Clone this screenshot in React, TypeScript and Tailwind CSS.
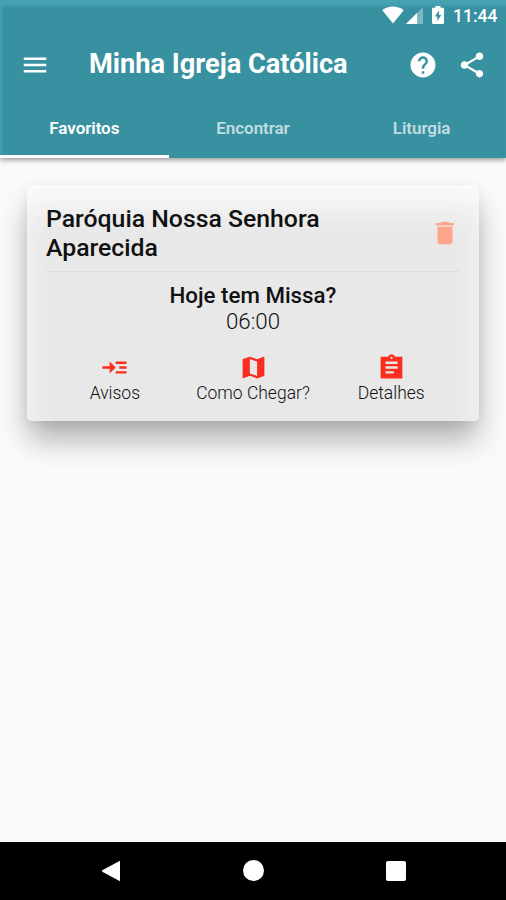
import type { ReactNode } from "react";

const actions = [
  {
    label: "Avisos",
    width: "w-[138px]",
    path: "M22 7h-9v2h9V7zm0 8h-9v2h9v-2zm0-4h-6v2h6v-2zm-9 1L8 7v4H2v2h6v4l5-5z",
  },
  {
    label: "Como Chegar?",
    width: "w-[139px]",
    path: "M20.5 3l-.16.03L15 5.1 9 3 3.36 4.9c-.21.07-.36.25-.36.48V20.5c0 .28.22.5.5.5l.16-.03L9 18.9l6 2.1 5.64-1.9c.21-.07.36-.25.36-.48V3.5c0-.28-.22-.5-.5-.5zM15 19l-6-2.11V5l6 2.11V19z",
  },
  {
    label: "Detalhes",
    width: "w-[138px]",
    path: "M21 3h-6.18C14.4 1.84 13.3 1 12 1c-1.3 0-2.4.84-2.82 2H3v18h18V3zm-9 0c.55 0 1 .45 1 1s-.45 1-1 1-1-.45-1-1 .45-1 1-1zm2 14H7v-2h7v2zm3-4H7v-2h10v2zm0-4H7V7h10v2z",
  },
];

const tabs = ["Favoritos", "Encontrar", "Liturgia"];

function Icon({ className, children }: { className: string; children: ReactNode }) {
  return (
    <svg viewBox="0 0 24 24" fill="currentColor" className={`shrink-0 ${className}`}>
      {children}
    </svg>
  );
}

function StatusBar() {
  return (
    <div className="flex h-[30px] items-center justify-end pr-[9px]">
      <svg viewBox="0 0 22 18" fill="currentColor" className="h-[18px] w-[22px]">
        <path d="M11 17.5L.3 4.2C3.4 1.8 7 .5 11 .5s7.6 1.3 10.7 3.7z" />
      </svg>
      <svg viewBox="0 0 18 17" fill="currentColor" className="ml-[2px] h-[17px] w-[18px]">
        <path d="M17 0v17H0z" opacity=".35" />
        <path d="M11 6v11H0z" />
      </svg>
      <svg viewBox="0 0 12 18" fill="currentColor" className="ml-[8px] h-[18px] w-[12px]">
        <path
          fillRule="evenodd"
          d="M3.5 0h5v1.8h2.3c.7 0 1.2.5 1.2 1.2v13.8c0 .7-.5 1.2-1.2 1.2H1.2C.5 18 0 17.5 0 16.8V3c0-.7.5-1.2 1.2-1.2h2.3zM7 4.5l-4.2 6h2.5V15l4-6H7z"
        />
      </svg>
      <span className="ml-[9px] mt-[3px] w-[44px] whitespace-nowrap text-[17.5px] font-medium leading-none">
        11:44
      </span>
    </div>
  );
}

function Header() {
  return (
    <header className="relative z-10 h-[158px] bg-[#3891a0] text-white shadow-[inset_0_7px_3px_-1px_#46a2b2,inset_2px_0_2px_#43a0af,0_2px_5px_rgba(0,0,0,0.4)]">
      <StatusBar />
      <div className="flex h-[69px] items-center pl-5">
        <Icon className="h-[30px] w-[30px]">
          <path d="M3 18h18v-2H3v2zm0-5h18v-2H3v2zm0-7v2h18V6H3z" />
        </Icon>
        <h1 className="ml-[39px] mt-px flex-1 whitespace-nowrap text-[27.2px] font-bold leading-none">
          Minha Igreja Católica
        </h1>
        <Icon className="h-[30px] w-[30px]">
          <path d="M12 2C6.48 2 2 6.48 2 12s4.48 10 10 10 10-4.48 10-10S17.52 2 12 2zm1 17h-2v-2h2v2zm2.07-7.75l-.9.92C13.45 12.9 13 13.5 13 15h-2v-.5c0-1.1.45-2.1 1.17-2.83l1.24-1.26c.37-.36.59-.86.59-1.41 0-1.1-.9-2-2-2s-2 .9-2 2H8c0-2.21 1.79-4 4-4s4 1.79 4 4c0 .88-.36 1.68-.93 2.25z" />
        </Icon>
        <Icon className="ml-[19px] mr-[19px] h-[30px] w-[30px]">
          <path d="M18 16.08c-.76 0-1.44.3-1.96.77L8.91 12.7c.05-.23.09-.46.09-.7s-.04-.47-.09-.7l7.05-4.11c.54.5 1.25.81 2.04.81 1.66 0 3-1.34 3-3s-1.34-3-3-3-3 1.34-3 3c0 .24.04.47.09.7L8.04 9.81C7.5 9.31 6.79 9 6 9c-1.66 0-3 1.34-3 3s1.34 3 3 3c.79 0 1.5-.31 2.04-.81l7.12 4.16c-.05.21-.08.43-.08.65 0 1.61 1.31 2.92 2.92 2.92s2.92-1.31 2.92-2.92-1.31-2.92-2.92-2.92z" />
        </Icon>
      </div>
      <nav className="grid h-[59px] grid-cols-3 text-[17px] font-semibold tracking-[-0.05px]">
        {tabs.map((tab, i) => (
          <button
            key={tab}
            className={
              i === 0
                ? "border-b-[3px] border-white pt-[3px]"
                : "border-b-[3px] border-transparent pt-[3px] text-white/70"
            }
          >
            {tab}
          </button>
        ))}
      </nav>
    </header>
  );
}

function ParishCard() {
  return (
    <section className="mx-[27px] mt-[27px] h-[236px] rounded-[5px] bg-[#e8e8e8] px-[19px] pt-[19px] text-[#111] shadow-[inset_0_26px_34px_-6px_#fcfcfc,0_20px_30px_-2px_rgba(0,0,0,0.31),0_2px_12px_rgba(0,0,0,0.06)]">
      <div className="flex h-[68px] border-b border-[#dedede]">
        <h2 className="flex-1 text-[24.8px] font-medium leading-[29px]">
          Paróquia Nossa Senhora
          <br />
          Aparecida
        </h2>
        <Icon className="mt-[14px] h-[30px] w-[30px] text-[#ffa58c]">
          <path d="M6 19c0 1.1.9 2 2 2h8c1.1 0 2-.9 2-2V7H6v12zM19 4h-3.5l-1-1h-5l-1 1H5v2h14V4z" />
        </Icon>
      </div>
      <div className="mt-[10px] text-center">
        <p className="text-[22.3px] font-medium leading-[26px]">Hoje tem Missa?</p>
        <p className="text-[22.3px] font-light leading-[26px]">06:00</p>
      </div>
      <div className="mt-[19px] flex">
        {actions.map((action) => (
          <button key={action.label} className={`flex flex-col items-center ${action.width}`}>
            <Icon className="h-[29px] w-[29px] text-[#fa2d1e]">
              <path d={action.path} />
            </Icon>
            <span className="mt-px whitespace-nowrap text-[17.5px] font-light leading-[21px]">{action.label}</span>
          </button>
        ))}
      </div>
    </section>
  );
}

function NavigationBar() {
  return (
    <footer className="grid h-[58px] grid-cols-[121px_275px_1fr] bg-black text-white">
      <svg viewBox="0 0 20 22" fill="currentColor" className="mt-[18px] h-[22px] w-[20px] justify-self-end">
        <path d="M19 .8v20.4L1.3 11.7q-1-.7 0-1.4z" />
      </svg>
      <span className="ml-[122px] mt-[18px] h-[21px] w-[21px] rounded-full bg-white" />
      <span className="-ml-[10px] mt-[19px] h-[20px] w-[20px] rounded-[2px] bg-white" />
    </footer>
  );
}

export default function App() {
  return (
    <div className="flex h-[900px] w-[506px] flex-col overflow-hidden bg-[#fafafa] font-['Roboto',sans-serif]">
      <Header />
      <main className="flex-1">
        <ParishCard />
      </main>
      <NavigationBar />
    </div>
  );
}
